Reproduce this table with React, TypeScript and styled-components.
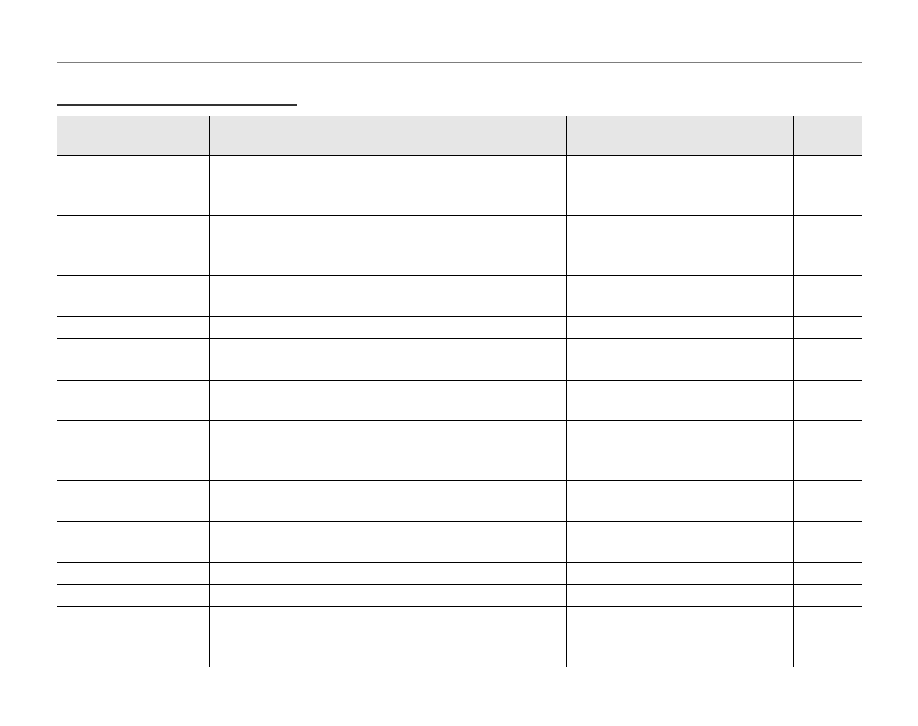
import React from "react";
import styled, { createGlobalStyle } from "styled-components";

const Global = createGlobalStyle`
  html, body { margin: 0; padding: 0; background: #fff; }
  body { font-family: "Liberation Sans", Arial, sans-serif; }
`;

const Page = styled.div`
  width: 918px;
  min-height: 726px;
  padding: 62px 0 0 57px;
  box-sizing: border-box;
`;

const Sheet = styled.div`
  width: 805px;
  display: flex;
  flex-direction: column;
`;

const TopRule = styled.div`
  height: 1px;
  background: #7d7d7d;
`;

const SectionBar = styled.div`
  margin-top: 41px;
  width: 240px;
  height: 2px;
  background: #333;
`;

const Table = styled.div`
  margin-top: 10px;
  display: flex;
  flex-direction: column;
`;

const Row = styled.div<{ $h: number; $head?: boolean; $last?: boolean }>`
  display: grid;
  grid-template-columns: 152px 357px 227px 1fr;
  height: ${(p) => p.$h}px;
  box-sizing: border-box;
  background: ${(p) => (p.$head ? "#e6e6e6" : "transparent")};
  border-bottom: ${(p) => (p.$last ? "none" : "1px solid #000")};
`;

const Cell = styled.div<{ $first?: boolean }>`
  border-left: ${(p) => (p.$first ? "none" : "1px solid #000")};
`;

const heights = [60, 60, 41, 22, 42, 40, 60, 41, 41, 22, 22, 60];

const TableRow: React.FC<{ h: number; head?: boolean; last?: boolean }> = ({ h, head, last }) => (
  <Row $h={h} $head={head} $last={last}>
    <Cell $first />
    <Cell />
    <Cell />
    <Cell />
  </Row>
);

export default function App() {
  return (
    <>
      <Global />
      <Page>
        <Sheet>
          <TopRule />
          <SectionBar />
          <Table>
            <TableRow h={40} head />
            {heights.map((h, i) => (
              <TableRow key={i} h={h} last={i === heights.length - 1} />
            ))}
          </Table>
        </Sheet>
      </Page>
    </>
  );
}
